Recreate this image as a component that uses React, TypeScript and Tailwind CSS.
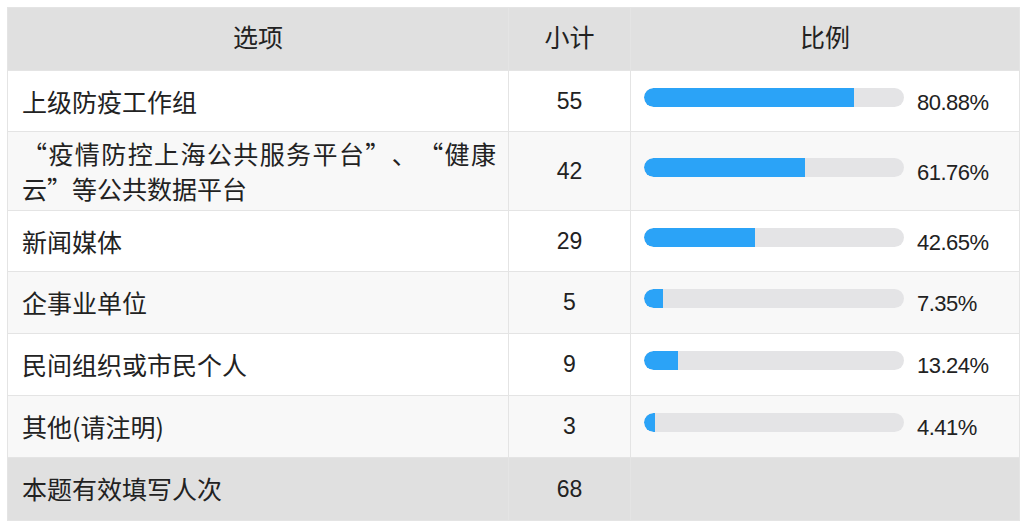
import React from "react"

type Row = {
  label: string
  count: number
  pct: number
}

const rows: Row[] = [
  { label: "上级防疫工作组", count: 55, pct: 80.88 },
  { label: "“疫情防控上海公共服务平台”、“健康云”等公共数据平台", count: 42, pct: 61.76 },
  { label: "新闻媒体", count: 29, pct: 42.65 },
  { label: "企事业单位", count: 5, pct: 7.35 },
  { label: "民间组织或市民个人", count: 9, pct: 13.24 },
  { label: "其他(请注明)", count: 3, pct: 4.41 },
]

const font = { fontFamily: '"Liberation Sans", "Noto Sans CJK SC", sans-serif' }
const cjk = { fontFamily: '"Noto Sans CJK SC", "Liberation Sans", sans-serif' }

const heights = ["h-[61px]", "h-[79px]", "h-[61px]", "h-[62px]", "h-[62px]", "h-[62px]"]

export default function App() {
  return (
    <div className="w-[1024px] h-[527px] bg-white pt-[7px] pl-[7px] text-[#222]" style={font}>
      <table className="border-collapse table-fixed w-[1012px]">
        <colgroup>
          <col className="w-[501px]" />
          <col className="w-[122px]" />
          <col className="w-[389px]" />
        </colgroup>
        <thead>
          <tr className="h-[63px] bg-[#e0e0e0]">
            <th className="font-normal text-[25px] border border-[#e4e4e4] text-center">选项</th>
            <th className="font-normal text-[25px] border border-[#e4e4e4] text-center">小计</th>
            <th className="font-normal text-[25px] border border-[#e4e4e4] text-center">比例</th>
          </tr>
        </thead>
        <tbody>
          {rows.map((r, i) => (
            <tr key={r.label} className={(i % 2 === 1 ? "bg-[#f8f8f8] " : "bg-white ") + heights[i]}>
              <td
                className="border border-[#e4e4e4] pl-[14px] pr-[12px] text-[25px] leading-[35px] text-justify [text-spacing-trim:space-all]"
                style={cjk}
              >
                {r.label}
              </td>
              <td className="border border-[#e4e4e4] text-center text-[23px]">{r.count}</td>
              <td className="border border-[#e4e4e4] pl-[13px]">
                <div className="flex items-center">
                  <div className="w-[260px] h-[19px] rounded-full bg-[#e4e4e6] overflow-hidden -mt-2">
                    <div className="h-full bg-[#2ba3f7] rounded-l-full" style={{ width: `${r.pct}%` }} />
                  </div>
                  <span className="ml-[13px] text-[22px] tracking-[-0.5px] mt-[2px]">{r.pct.toFixed(2)}%</span>
                </div>
              </td>
            </tr>
          ))}
          <tr className="h-[63px] bg-[#e0e0e0]">
            <td className="border border-[#e4e4e4] pl-[14px] text-[25px]" style={cjk}>本题有效填写人次</td>
            <td className="border border-[#e4e4e4] text-center text-[23px]">68</td>
            <td className="border border-[#e4e4e4]"></td>
          </tr>
        </tbody>
      </table>
    </div>
  )
}
